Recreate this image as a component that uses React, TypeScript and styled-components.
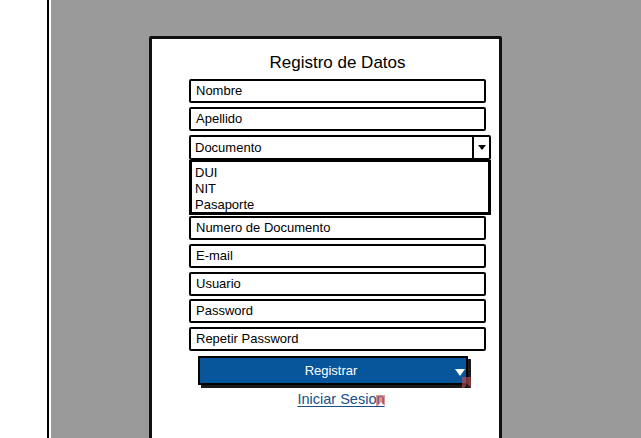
import React from 'react';
import styled, { createGlobalStyle } from 'styled-components';

const Global = createGlobalStyle`
  html, body { margin: 0; padding: 0; }
  body {
    width: 641px;
    height: 438px;
    overflow: hidden;
    font-family: "Liberation Sans", Arial, sans-serif;
    background: #ffffff;
  }
`;

const Page = styled.div`
  display: flex;
  height: 438px;
`;

const Side = styled.div`
  width: 47px;
  background: #fff;
  flex-shrink: 0;
`;

const Divider = styled.div`
  width: 2px;
  background: #000;
  border-right: 2px solid #fff;
  flex-shrink: 0;
`;

const Canvas = styled.div`
  flex: 1;
  background: #9a9a9a;
  padding: 36px 0 0 98px;
  overflow: hidden;
`;

const Card = styled.div`
  width: 347px;
  height: 400px;
  background: #fff;
  border: 3px solid #111;
  border-radius: 2px;
  display: flex;
  flex-direction: column;
  padding-top: 14px;
`;

const Title = styled.h1`
  margin: 0 0 6px 37px;
  width: 297px;
  font-size: 17px;
  line-height: 20px;
  font-weight: normal;
  color: #000;
  text-align: center;
`;

const Form = styled.div`
  display: flex;
  flex-direction: column;
  padding-left: 37px;
`;

const Field = styled.div<{ $w?: number; $mt?: number }>`
  width: ${p => p.$w ?? 297}px;
  height: 24px;
  box-sizing: border-box;
  border: 2px solid #000;
  border-radius: 2px;
  background: #fff;
  font-size: 13px;
  line-height: 20px;
  padding-left: 5px;
  color: #000;
  margin-top: ${p => p.$mt ?? 4}px;
  display: flex;
  align-items: center;
`;

const SelectBox = styled(Field)`
  padding-left: 4px;
  height: 25px;
`;

const SelectLabel = styled.span`
  flex: 1;
`;

const Arrow = styled.div`
  width: 15px;
  height: 100%;
  border-left: 2px solid #000;
  display: flex;
  align-items: center;
  justify-content: center;
  &::after {
    content: '';
    border-left: 4px solid transparent;
    border-right: 4px solid transparent;
    border-top: 5px solid #000;
  }
`;

const List = styled.div`
  width: 302px;
  height: 55px;
  box-sizing: border-box;
  border: 3px solid #000;
  border-top-width: 2px;
  background: #fff;
  padding: 3px 0 0 3px;
  display: flex;
  flex-direction: column;
`;

const Option = styled.div`
  font-size: 13px;
  line-height: 16px;
  color: #000;
`;

const ButtonWrap = styled.div`
  position: relative;
  margin: 5px 0 0 9px;
  width: 270px;
`;

const Button = styled.div`
  width: 270px;
  height: 29px;
  box-sizing: border-box;
  background: #07559a;
  border: 2px solid #000;
  box-shadow: 3px 3px 0 #1a1a1a;
  color: #fff;
  font-size: 13px;
  padding-right: 4px;
  display: flex;
  align-items: center;
  justify-content: center;
  position: relative;
  &::after {
    content: '';
    position: absolute;
    right: 1px;
    top: 11px;
    border-left: 5px solid transparent;
    border-right: 5px solid transparent;
    border-top: 7px solid #fff;
  }
`;

const LinkRow = styled.div`
  margin: 6px 0 0 17px;
  width: 270px;
  display: flex;
  justify-content: center;
`;

const Link = styled.a`
  color: #1b4f86;
  font-size: 14.5px;
  line-height: 16px;
  text-decoration: underline;
  text-underline-offset: 2px;
  position: relative;
`;

const Mark = styled.svg<{ $r: number; $t: number }>`
  position: absolute;
  right: ${p => p.$r}px;
  top: ${p => p.$t}px;
`;

const Flag = ({ r, t }: { r: number; t: number }) => (
  <Mark $r={r} $t={t} width="11" height="13" viewBox="0 0 11 13">
    <path d="M1 1 L10 1 L10 12 L6 8 L3 12 L1 12 Z" fill="#c94f50" opacity="0.6" />
  </Mark>
);

export default function App() {
  return (
    <>
      <Global />
      <Page>
        <Side />
        <Divider />
        <Canvas>
          <Card>
            <Title>Registro de Datos</Title>
            <Form>
              <Field $mt={0}>Nombre</Field>
              <Field>Apellido</Field>
              <SelectBox $w={302}>
                <SelectLabel>Documento</SelectLabel>
                <Arrow />
              </SelectBox>
              <List>
                <Option>DUI</Option>
                <Option>NIT</Option>
                <Option>Pasaporte</Option>
              </List>
              <Field $mt={1}>Numero de Documento</Field>
              <Field>E-mail</Field>
              <Field>Usuario</Field>
              <Field $mt={3}>Password</Field>
              <Field>Repetir Password</Field>
              <ButtonWrap>
                <Button>Registrar</Button>
                <Flag r={-4} t={20} />
              </ButtonWrap>
              <LinkRow>
                <Link href="#">
                  Iniciar Sesion
                  <Flag r={-1} t={3} />
                </Link>
              </LinkRow>
            </Form>
          </Card>
        </Canvas>
      </Page>
    </>
  );
}
